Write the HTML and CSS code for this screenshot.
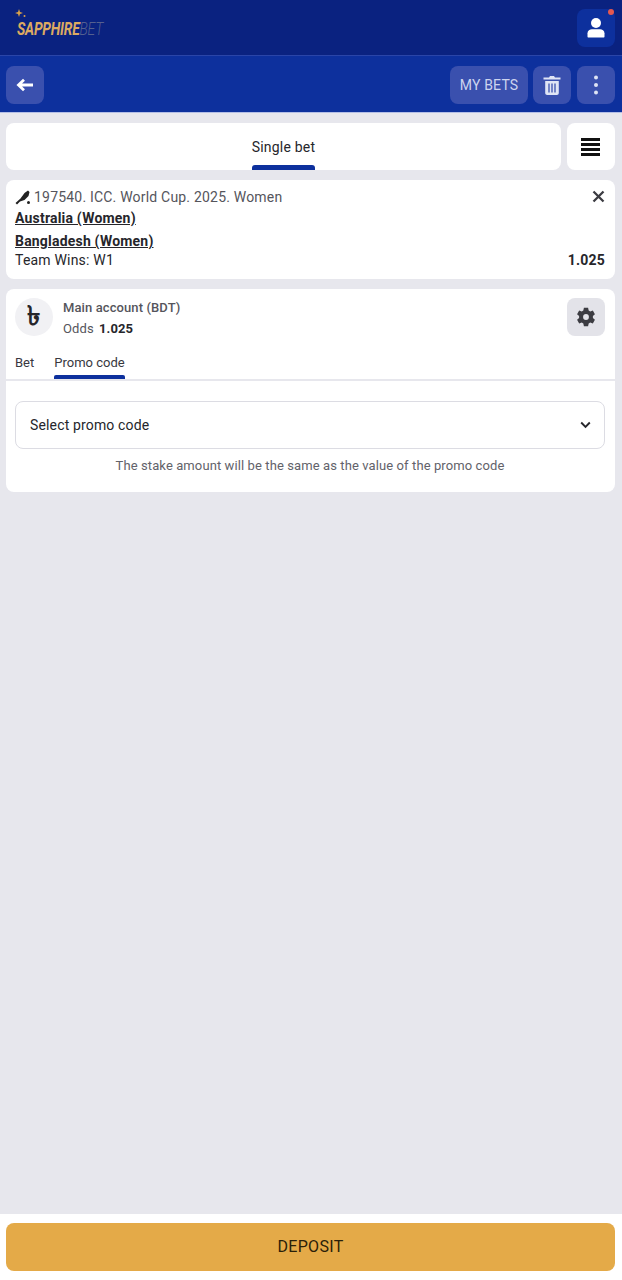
FILE: index.html
```html
<!DOCTYPE html>
<html lang="en">
<head>
    <meta charset="UTF-8">
    <meta name="viewport" content="width=device-width, initial-scale=1.0">
    <title>Bet slip</title>
    <link rel="stylesheet" href="styles.css">
</head>
<body>
    <header class="top-bar">
        <div class="logo">
            <svg class="logo-stars" width="12" height="12" viewBox="0 0 12 12"><path d="M4 0l1 3 3 1-3 1-1 3-1-3-3-1 3-1z" fill="#d9a24a"/><circle cx="9.500" cy="7" r="1" fill="#d9a24a"/></svg>
            <div class="logo-text"><span class="logo-gold">SAPPHIRE</span><span class="logo-thin">BET</span></div>
        </div>
        <button class="icon-btn user-btn">
            <svg width="18" height="20" viewBox="0 0 18 20"><circle cx="9" cy="5" r="5" fill="#fff"/><path d="M.500 18.500v-3.200c0-2.500 2.300-4 4.500-4h8c2.200 0 4.500 1.500 4.500 4v3.200c0 .6-.4 1-1 1h-15c-.6 0-1-.4-1-1z" fill="#fff"/></svg>
            <span class="dot"></span>
        </button>
    </header>

    <nav class="sub-bar">
        <button class="icon-btn">
            <svg class="back-icon" width="18" height="14" viewBox="0 0 18 14"><path d="M17 7H3M8 1.800L2.500 7 8 12.200" fill="none" stroke="#fff" stroke-width="2.800"/></svg>
        </button>
        <div class="sub-actions">
            <button class="icon-btn text-btn">MY BETS</button>
            <button class="icon-btn">
                <svg width="18" height="20" viewBox="0 0 18 20"><path d="M.500 2.500h5.500l1-1.500h4l1 1.500h5.500v2H.500z" fill="#dfe4f5"/><path d="M2.200 6h13.600v12c0 1-.8 2-2 2H4.200c-1.200 0-2-1-2-2z" fill="#dfe4f5"/><path d="M6 8.500v9M9 8.500v9M12 8.500v9" stroke="#3a50ae" stroke-width="1.300"/></svg>
            </button>
            <button class="icon-btn more-btn">
                <svg width="6" height="20" viewBox="0 0 6 20"><circle cx="3" cy="2.500" r="2" fill="#dfe4f5"/><circle cx="3" cy="10" r="2" fill="#dfe4f5"/><circle cx="3" cy="17.500" r="2" fill="#dfe4f5"/></svg>
            </button>
        </div>
    </nav>

    <main class="content">
        <div class="mode-row">
            <div class="card mode-tab">
                <span>Single bet</span>
                <i class="underline"></i>
            </div>
            <button class="card list-btn">
                <span></span><span></span><span></span><span></span>
            </button>
        </div>

        <section class="card event">
            <div class="event-title">
                <svg class="bat" width="16" height="16" viewBox="0 0 16 16"><path d="M.500 14L5.500 9.500 9.500 4 13 1.500 14.500 3 13.500 7 9.500 11 5 12.500 2 15.500z" fill="#222"/><circle cx="13.500" cy="13.500" r="1.500" fill="#222"/></svg>
                <span>197540. ICC. World Cup. 2025. Women</span>
                <svg class="close" width="13" height="13" viewBox="0 0 13 13"><path d="M1.500 1.500l10 10M11.500 1.500l-10 10" stroke="#3c3c42" stroke-width="2.300"/></svg>
            </div>
            <a class="team">Australia (Women)</a>
            <a class="team">Bangladesh (Women)</a>
            <div class="event-foot">
                <span>Team Wins: W1</span>
                <b>1.025</b>
            </div>
        </section>

        <section class="card account">
            <div class="account-head">
                <div class="currency">৳</div>
                <div class="account-info">
                    <div class="account-name">Main account (BDT)</div>
                    <div class="odds">Odds <b>1.025</b></div>
                </div>
                <button class="gear-btn">
                    <svg width="20" height="20" viewBox="0 0 24 24"><path fill="#3c3c42" fill-rule="evenodd" d="M9.500 1h5l.7 3.200 1.900 1.100 3.100-1 2.500 4.300-2.400 2.200v2.400l2.400 2.200-2.500 4.300-3.100-1-1.900 1.100-.7 3.200h-5l-.7-3.200-1.900-1.100-3.100 1-2.500-4.300 2.400-2.200v-2.400L1.300 8.600l2.500-4.300 3.100 1 1.900-1.100zM12 8.500a3.500 3.500 0 1 0 0 7 3.500 3.500 0 0 0 0-7z"/></svg>
                </button>
            </div>
            <div class="bet-tabs">
                <span class="bet-tab">Bet</span>
                <span class="bet-tab active">Promo code</span>
            </div>
            <div class="promo">
                <div class="select">
                    <span>Select promo code</span>
                    <svg width="11" height="8" viewBox="0 0 11 8"><path d="M1.200 1.500l4.300 4.300 4.300-4.300" fill="none" stroke="#26262b" stroke-width="1.900"/></svg>
                </div>
                <p class="note">The stake amount will be the same as the value of the promo code</p>
            </div>
        </section>
    </main>

    <footer class="footer">
        <button class="deposit">DEPOSIT</button>
    </footer>
</body>
</html>
```
FILE: styles.css
```css
* {
    box-sizing: border-box;
}
html, body {
    height: 100%;
}
body {
    margin: 0;
    display: flex;
    flex-direction: column;
    height: 1280px;
    font-family: Roboto, "Liberation Sans", sans-serif;
    letter-spacing: 0.2px;
    background-color: #e7e7ed;
    color: #26262b;
}
button {
    font-family: inherit;
    letter-spacing: inherit;
    border: none;
    padding: 0;
    cursor: pointer;
}
.top-bar {
    height: 56px;
    flex-shrink: 0;
    display: flex;
    align-items: center;
    justify-content: space-between;
    padding: 0 7px 0 17px;
    background-color: #0a2280;
    border-bottom: 1px solid #2a45a8;
}
.logo {
    position: relative;
    width: 88px;
    margin-top: 2px;
}
.logo-stars {
    position: absolute;
    left: -2px;
    top: -8px;
}
.logo-text {
    display: flex;
    align-items: baseline;
    font-size: 19px;
    font-style: italic;
    letter-spacing: -0.3px;
    white-space: nowrap;
    transform: scaleX(0.73);
    transform-origin: left center;
}
.logo-gold {
    font-weight: 700;
    color: #dcaa62;
}
.logo-thin {
    font-weight: 300;
    color: #55608f;
}
.icon-btn {
    position: relative;
    width: 38px;
    height: 38px;
    display: flex;
    align-items: center;
    justify-content: center;
    border-radius: 8px;
    background-color: #3a50ae;
    color: #cdd4ee;
}
.back-icon {
    margin-right: 1px;
}
.user-btn {
    background-color: #0d309d;
}
.dot {
    position: absolute;
    top: 0;
    right: 1px;
    width: 6px;
    height: 6px;
    border-radius: 50%;
    background-color: #e4584f;
}
.sub-bar {
    height: 57px;
    flex-shrink: 0;
    display: flex;
    align-items: center;
    justify-content: space-between;
    padding: 2px 7px 0 6px;
    background-color: #0d309d;
    border-bottom: 1px solid #b5bfe6;
}
.sub-actions {
    display: flex;
    gap: 5px;
}
.more-btn {
    margin-left: 1px;
}
.text-btn {
    width: 78px;
    font-size: 14px;
}
.content {
    flex: 1;
    display: flex;
    flex-direction: column;
    gap: 10px;
    padding: 10px 7px 0 6px;
}
.card {
    background-color: #fff;
    border-radius: 8px;
}
.mode-row {
    display: flex;
    gap: 6px;
    height: 47px;
}
.mode-tab {
    position: relative;
    flex: 1;
    display: flex;
    align-items: center;
    justify-content: center;
    font-size: 14px;
}
.underline {
    position: absolute;
    left: 246px;
    bottom: 0;
    width: 63px;
    height: 5px;
    border-radius: 3px 3px 0 0;
    background-color: #0d309d;
}
.list-btn {
    width: 48px;
    padding-right: 1px;
    display: flex;
    flex-direction: column;
    align-items: center;
    justify-content: center;
    gap: 2px;
}
.list-btn span {
    width: 19px;
    height: 3px;
    background-color: #111;
}
.event {
    height: 99px;
    padding: 7px 10px 0 9px;
    font-size: 14px;
}
.event-title {
    display: flex;
    align-items: center;
    gap: 3px;
    height: 19px;
    color: #55555c;
}
.bat {
    flex-shrink: 0;
}
.close {
    margin-left: auto;
}
.team {
    display: block;
    margin-top: 2px;
    height: 20px;
    line-height: 20px;
    font-weight: 700;
    text-decoration: underline;
    color: #26262b;
}
.team + .team {
    margin-top: 3px;
}
.event-foot {
    display: flex;
    justify-content: space-between;
    height: 20px;
    margin-top: -1px;
    line-height: 20px;
}
.account {
    height: 203px;
    padding-top: 9px;
}
.account-head {
    display: flex;
    align-items: center;
    height: 38px;
    padding: 0 10px 0 9px;
}
.currency {
    width: 38px;
    height: 38px;
    display: flex;
    align-items: center;
    justify-content: center;
    border-radius: 50%;
    background-color: #f1f1f4;
    font-family: "Noto Sans", "DejaVu Sans", sans-serif;
    font-size: 27px;
    font-weight: 700;
    color: #26262b;
}
.account-info {
    flex: 1;
    margin-left: 10px;
    padding-top: 3px;
    font-size: 13px;
    letter-spacing: 0;
    color: #55555c;
}
.account-name {
    font-weight: 500;
    line-height: 20px;
    letter-spacing: 0.1px;
}
.odds {
    line-height: 22px;
    letter-spacing: 0.1px;
}
.odds b {
    margin-left: 2px;
    color: #26262b;
}
.gear-btn {
    width: 38px;
    height: 38px;
    display: flex;
    align-items: center;
    justify-content: center;
    border-radius: 8px;
    background-color: #e3e3e9;
}
.bet-tabs {
    display: flex;
    gap: 20px;
    height: 35px;
    margin-top: 10px;
    padding-left: 9px;
    border-bottom: 2px solid #e7e7ed;
    font-size: 13px;
    letter-spacing: 0;
}
.bet-tab {
    position: relative;
    padding-top: 9px;
    color: #38383e;
}
.bet-tab.active::after {
    content: "";
    position: absolute;
    left: 0;
    right: 0;
    bottom: 0;
    height: 4px;
    border-radius: 2px 2px 0 0;
    background-color: #0d309d;
}
.promo {
    padding: 20px 10px 0 9px;
}
.select {
    display: flex;
    align-items: center;
    justify-content: space-between;
    height: 48px;
    padding: 0 13px 0 14px;
    border: 1px solid #dcdce3;
    border-radius: 8px;
    font-size: 14px;
    letter-spacing: 0.15px;
}
.note {
    margin: 8px 0 0;
    text-align: center;
    font-size: 13px;
    letter-spacing: 0.1px;
    line-height: 18px;
    color: #62626a;
}
.footer {
    height: 66px;
    flex-shrink: 0;
    padding: 9px 7px 0 6px;
    background-color: #fff;
}
.deposit {
    width: 100%;
    height: 48px;
    padding-bottom: 2px;
    border-radius: 8px;
    background-color: #e4aa48;
    color: #2a2008;
    font-size: 16px;
    letter-spacing: 0.3px;
}
```
